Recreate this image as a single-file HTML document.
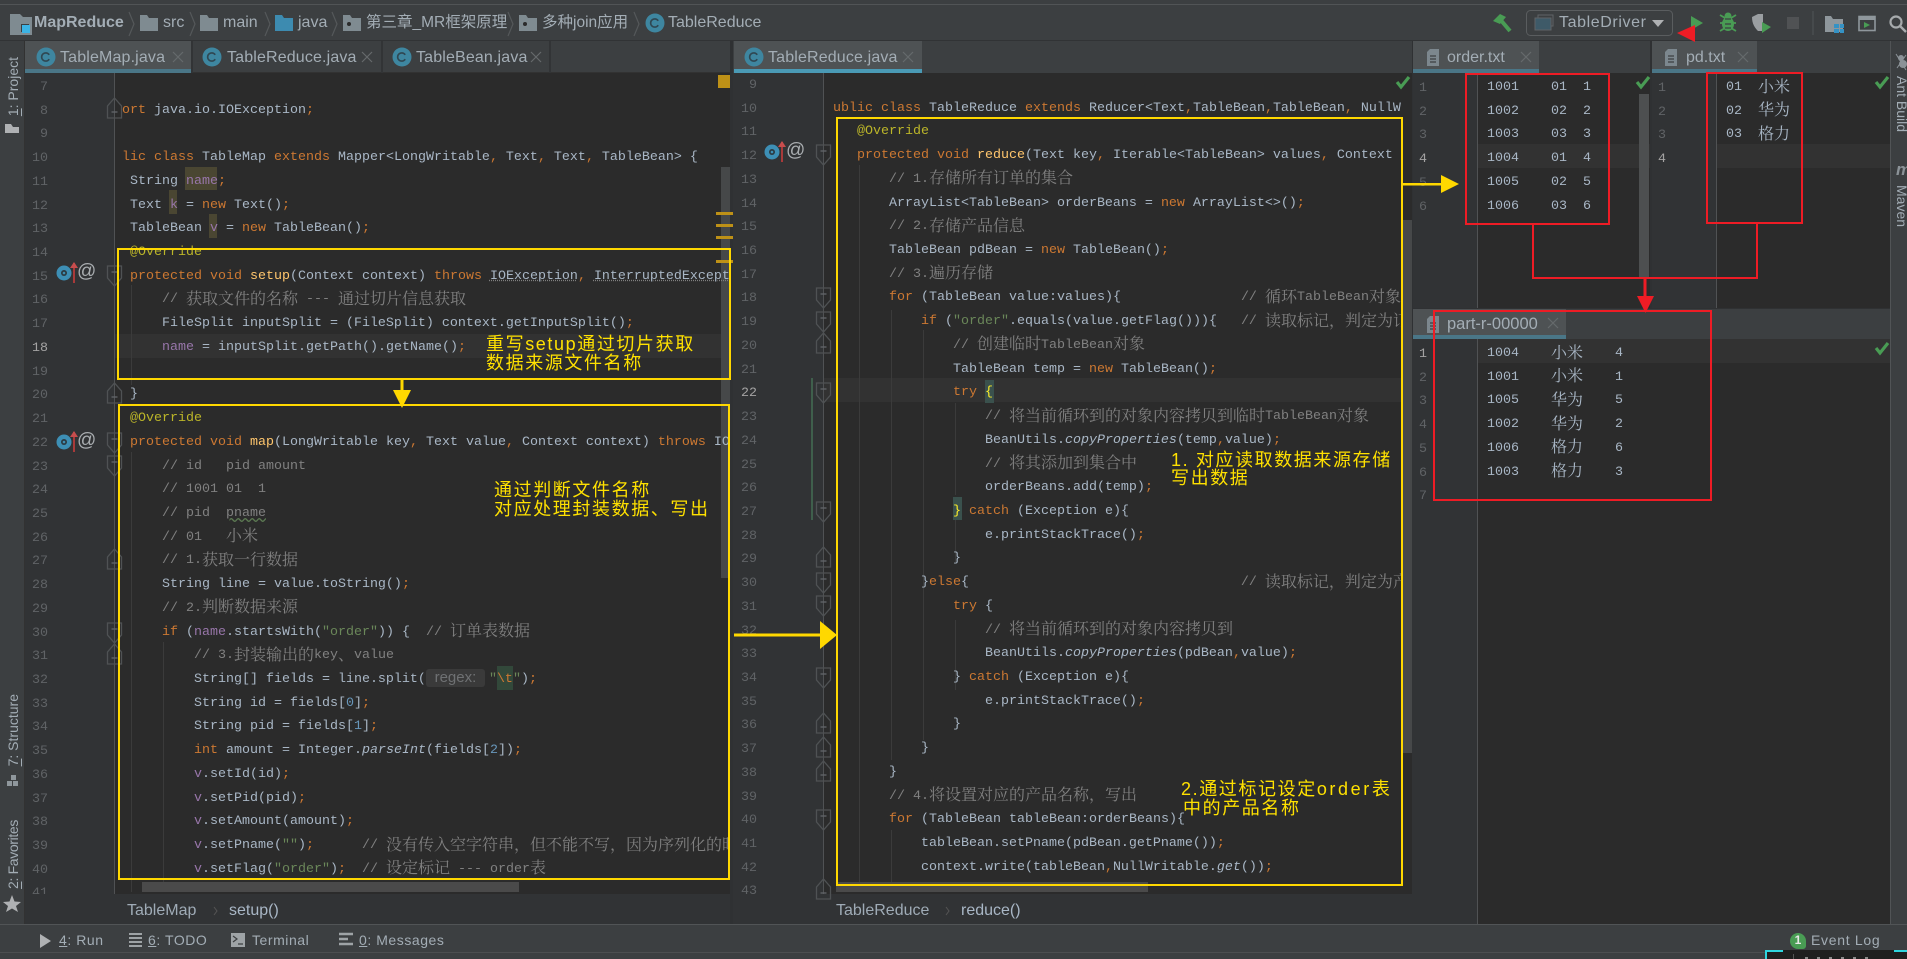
<!DOCTYPE html>
<html lang="zh">
<head>
<meta charset="utf-8">
<title>MapReduce</title>
<style>
html,body{margin:0;padding:0;background:#3c3f41}
body{position:relative;width:1907px;height:959px;overflow:hidden;font-family:"Liberation Sans","Noto Sans CJK SC",sans-serif;color:#a4afb8}
.a{position:absolute}
.ui{position:absolute;white-space:pre;font-size:16px;line-height:20px;color:#a3adb5}
.code{position:absolute;overflow:hidden;font:13.33px "Liberation Mono","Noto Serif CJK SC",monospace;color:#a9b7c6}
.code p{margin:0;height:23.72px;line-height:23.72px;white-space:pre}
.ln{position:absolute;margin:0;overflow:hidden;font:13.33px/23.72px "Liberation Mono",monospace;color:#606366;text-align:right;white-space:pre}
.ln b{font-weight:normal;color:#a4a3a3}
k{color:#cc7832}c{color:#808080}f{color:#9876aa}y{color:#ffc66d}t{color:#6a8759}n{color:#6897bb}o{color:#bbb529}
z{font-size:16px;line-height:0;position:relative;top:1.5px;font-family:"Noto Serif CJK SC","Noto Sans CJK SC",serif}
u{text-decoration:underline dotted #808080}
u.w{text-decoration:underline wavy #5c7a52}
.hint{display:inline-block;width:59px;margin-right:4px;font:15px/18px "Liberation Sans",sans-serif;color:#6f7173;background:#3a3a3a;border-radius:3px;text-align:center;vertical-align:baseline}
.v{position:absolute;writing-mode:vertical-rl;white-space:pre;font-size:14px;line-height:20px;color:#a3adb5}
.vr{transform:rotate(180deg)}
.note{position:absolute;white-space:pre;font:18px/20px "Liberation Sans","Noto Sans CJK SC",sans-serif;letter-spacing:1.6px;color:#ffe100;z-index:9}
.tool{position:absolute;top:931px;white-space:pre;font-size:14px;line-height:18px;letter-spacing:.55px;color:#a3adb5}
</style>
</head>
<body>

<!-- backgrounds -->
<div class="a" style="left:0;top:4px;width:1907px;height:1px;background:#515456"></div>
<div class="a" style="left:0;top:40px;width:1907px;height:1px;background:#313335"></div>

<!-- pane 1 -->
<div class="a" style="left:25px;top:73px;width:705px;height:821px;background:#2b2b2b"></div>
<div class="a" style="left:25px;top:73px;width:90px;height:821px;background:#313335"></div>
<div class="a" style="left:25px;top:894px;width:705px;height:30px;background:#313335"></div>
<div class="a" style="left:25px;top:72px;width:705px;height:1px;background:#323232"></div>
<div class="a" style="left:24px;top:41px;width:1px;height:883px;background:#323232"></div>
<!-- pane 2 -->
<div class="a" style="left:730px;top:41px;width:3px;height:883px;background:#2f3133"></div>
<div class="a" style="left:733px;top:73px;width:679px;height:821px;background:#2b2b2b"></div>
<div class="a" style="left:733px;top:73px;width:90px;height:821px;background:#313335"></div>
<div class="a" style="left:733px;top:894px;width:679px;height:30px;background:#313335"></div>
<!-- pane 3 / 4 / 5 -->
<div class="a" style="left:1412px;top:41px;width:1px;height:883px;background:#2f3133"></div>
<div class="a" style="left:1413px;top:73px;width:477px;height:235px;background:#2b2b2b"></div>
<div class="a" style="left:1413px;top:73px;width:64px;height:235px;background:#313335"></div>
<div class="a" style="left:1652px;top:73px;width:64px;height:235px;background:#313335"></div>
<div class="a" style="left:1650px;top:41px;width:2px;height:267px;background:#2f3133"></div>
<div class="a" style="left:1413px;top:339px;width:477px;height:585px;background:#2b2b2b"></div>
<div class="a" style="left:1412px;top:339px;width:65px;height:585px;background:#313335"></div>
<div class="a" style="left:1477px;top:73px;width:1px;height:235px;background:#505254"></div>
<div class="a" style="left:1716px;top:73px;width:1px;height:235px;background:#505254"></div>
<div class="a" style="left:1477px;top:339px;width:1px;height:585px;background:#505254"></div>
<div class="a" style="left:1413px;top:308px;width:477px;height:1px;background:#2f3133"></div>
<div class="a" style="left:1890px;top:41px;width:1px;height:883px;background:#515456"></div>
<div class="a" style="left:114px;top:73px;width:1px;height:821px;background:#505254"></div>
<div class="a" style="left:823px;top:73px;width:1px;height:821px;background:#505254"></div>

<!-- current line bands -->
<div class="a" style="left:115px;top:334px;width:615px;height:24px;background:#323232"></div>
<div class="a" style="left:824px;top:378px;width:588px;height:24px;background:#323232"></div>
<div class="a" style="left:1478px;top:144px;width:172px;height:24px;background:#323232"></div>
<div class="a" style="left:1717px;top:144px;width:173px;height:24px;background:#323232"></div>
<div class="a" style="left:1478px;top:339px;width:412px;height:24px;background:#323232"></div>

<!-- identifier highlights -->
<div class="a" style="left:185px;top:167px;width:32px;height:23px;background:#4a4632"></div>
<div class="a" style="left:169px;top:190px;width:8px;height:24px;background:#4a4632"></div>
<div class="a" style="left:209px;top:214px;width:8px;height:24px;background:#4a4632"></div>
<div class="a" style="left:497px;top:666px;width:16px;height:24px;background:#32483a"></div>
<div class="a" style="left:985px;top:380px;width:9px;height:23px;background:#3a514d"></div>
<div class="a" style="left:953px;top:497px;width:9px;height:23px;background:#3a514d"></div>

<!-- indent guides -->
<div class="a" style="left:131px;top:285px;width:1px;height:100px;background:#3b3b3b"></div>
<div class="a" style="left:131px;top:452px;width:1px;height:440px;background:#3b3b3b"></div>
<div class="a" style="left:163px;top:642px;width:1px;height:250px;background:#3b3b3b"></div>
<div class="a" style="left:859px;top:165px;width:1px;height:725px;background:#3b3b3b"></div>
<div class="a" style="left:891px;top:310px;width:1px;height:450px;background:#3b3b3b"></div>
<div class="a" style="left:891px;top:830px;width:1px;height:60px;background:#3b3b3b"></div>
<div class="a" style="left:923px;top:330px;width:1px;height:410px;background:#3b3b3b"></div>
<div class="a" style="left:955px;top:403px;width:1px;height:92px;background:#3b3b3b"></div>
<div class="a" style="left:955px;top:520px;width:1px;height:42px;background:#3b3b3b"></div>
<div class="a" style="left:955px;top:620px;width:1px;height:70px;background:#3b3b3b"></div>
<div class="a" style="left:811px;top:378px;width:2px;height:142px;background:#3f5f4c"></div>

<!-- scrollbars and stripes -->
<div class="a" style="left:721px;top:167px;width:9px;height:411px;background:#464849"></div>
<div class="a" style="left:718px;top:75px;width:12px;height:13px;background:#be9117"></div>
<div class="a" style="left:716px;top:212px;width:17px;height:3px;background:#be9117"></div>
<div class="a" style="left:716px;top:224px;width:17px;height:3px;background:#be9117"></div>
<div class="a" style="left:716px;top:236px;width:17px;height:3px;background:#be9117"></div>
<div class="a" style="left:716px;top:260px;width:17px;height:3px;background:#be9117"></div>
<div class="a" style="left:1402px;top:220px;width:10px;height:533px;background:#464849"></div>
<div class="a" style="left:1639px;top:94px;width:10px;height:184px;background:#4d4f50"></div>
<div class="a" style="left:142px;top:882px;width:377px;height:10px;background:#4a4a4a;z-index:2"></div>
<div class="a" style="left:836px;top:882px;width:312px;height:10px;background:#4a4a4a;z-index:2"></div>

<!-- tab bars -->
<div class="a" style="left:25px;top:41px;width:167px;height:32px;background:#4e5254"></div>
<div class="a" style="left:25px;top:69px;width:167px;height:4px;background:#4a7687"></div>
<div class="a" style="left:191px;top:41px;width:2px;height:32px;background:#323436"></div>
<div class="a" style="left:381px;top:41px;width:2px;height:32px;background:#323436"></div>
<div class="a" style="left:549px;top:41px;width:2px;height:32px;background:#323436"></div>
<div class="a" style="left:734px;top:41px;width:188px;height:32px;background:#4e5254"></div>
<div class="a" style="left:734px;top:69px;width:188px;height:4px;background:#4a9ab5"></div>
<div class="a" style="left:1413px;top:41px;width:126px;height:32px;background:#4e5254"></div>
<div class="a" style="left:1413px;top:69px;width:126px;height:4px;background:#4a7687"></div>
<div class="a" style="left:1652px;top:41px;width:105px;height:32px;background:#4e5254"></div>
<div class="a" style="left:1652px;top:69px;width:105px;height:4px;background:#4a7687"></div>
<div class="a" style="left:1413px;top:309px;width:153px;height:30px;background:#4e5254"></div>
<div class="a" style="left:1413px;top:335px;width:153px;height:4px;background:#4a7687"></div>

<div class="ui" style="left:60px;top:48px;letter-spacing:.15px">TableMap.java</div>
<div class="ui" style="left:227px;top:48px;letter-spacing:.15px">TableReduce.java</div>
<div class="ui" style="left:416px;top:48px;letter-spacing:.15px">TableBean.java</div>
<div class="ui" style="left:768px;top:48px;letter-spacing:.15px">TableReduce.java</div>
<div class="ui" style="left:1447px;top:48px">order.txt</div>
<div class="ui" style="left:1686px;top:48px">pd.txt</div>
<div class="ui" style="left:1447px;top:314px;font-size:16.5px">part-r-00000</div>

<!-- nav bar text -->
<div class="ui" style="left:34px;top:13px;font-weight:bold">MapReduce</div>
<div class="ui" style="left:163px;top:13px">src</div>
<div class="ui" style="left:223px;top:13px">main</div>
<div class="ui" style="left:298px;top:13px">java</div>
<div class="ui" style="left:366px;top:13px;font-size:15.5px">第三章_MR框架原理</div>
<div class="ui" style="left:542px;top:13px;font-size:15.5px">多种join应用</div>
<div class="ui" style="left:668px;top:13px">TableReduce</div>
<div class="ui" style="left:1559px;top:13px;letter-spacing:.6px">TableDriver</div>

<!-- bread crumbs bottom -->
<div class="ui" style="left:127px;top:901px;color:#9fabb6">TableMap</div>
<div class="ui" style="left:229px;top:901px;color:#a9b7c6">setup()</div>
<div class="ui" style="left:836px;top:901px;color:#9fabb6">TableReduce</div>
<div class="ui" style="left:961px;top:901px;color:#a9b7c6">reduce()</div>

<!-- bottom bar -->
<div class="a" style="left:0;top:924px;width:1907px;height:1px;background:#515456"></div>
<div class="a" style="left:0;top:952px;width:1907px;height:1px;background:#4c4e50"></div>
<div class="tool" style="left:59px"><span style="text-decoration:underline">4</span>: Run</div>
<div class="tool" style="left:148px"><span style="text-decoration:underline">6</span>: TODO</div>
<div class="tool" style="left:252px">Terminal</div>
<div class="tool" style="left:359px"><span style="text-decoration:underline">0</span>: Messages</div>
<div class="tool" style="left:1811px;letter-spacing:.7px">Event Log</div>
<div class="a" style="left:1790px;top:933px;width:16px;height:16px;border-radius:8px 8px 3px 8px;background:#499c54;color:#e8e8e8;font-size:12px;line-height:15px;text-align:center;font-weight:bold">1</div>
<div class="a" style="left:1765px;top:950px;width:142px;height:9px;background:#1f1f1f"></div>
<div class="a" style="left:1765px;top:950px;width:18px;height:2px;background:#2fd5df"></div>
<div class="a" style="left:1765px;top:950px;width:2px;height:9px;background:#2fd5df"></div>
<div class="a" style="left:1894px;top:950px;width:13px;height:2px;background:#2fd5df"></div>
<div class="a" style="left:1793px;top:954px;width:1px;height:5px;background:#555"></div>
<div class="a" style="left:1805px;top:957px;width:70px;height:2px;background:repeating-linear-gradient(90deg,#8a8a8a 0 3px,#1f1f1f 3px 12px)"></div>

<!-- vertical labels -->
<div class="v vr" style="left:3px;top:57px"><span style="text-decoration:underline">1</span>: Project</div>
<div class="v vr" style="left:3px;top:694px"><span style="text-decoration:underline">7</span>: Structure</div>
<div class="v vr" style="left:3px;top:820px;letter-spacing:-.35px"><span style="text-decoration:underline">2</span>: Favorites</div>
<div class="v" style="left:1892px;top:76px">Ant Build</div>
<div class="v" style="left:1892px;top:185px">Maven</div>
<div class="a" style="left:1896px;top:160px;font:italic bold 17px/20px 'Liberation Sans',sans-serif;color:#8b9297">m</div>

<!-- shapes -->
<svg class="a" style="left:0;top:0;z-index:2" width="1907" height="959" viewBox="0 0 1907 959">
<defs>
<g id="fs" fill="none" stroke="#4f5254" stroke-width="1.3"><path d="M-7-9H7V3L0 11-7 3Z"/><path d="M-3-3H3" stroke="#63666a"/></g>
<g id="fe" fill="none" stroke="#4f5254" stroke-width="1.3"><path d="M-7 9H7V-3L0-11-7-3Z"/><path d="M-3 3H3" stroke="#63666a"/></g>
<g id="folder"><path d="M0 1H7L9 4H18V17H0Z"/></g>
<g id="file"><path d="M3 0H12V17H0V3Z" fill="#7c878e"/><path d="M3 7H9M3 10H9M3 13H9" stroke="#3c3f41" stroke-width="1.3"/></g>
<g id="check"><path d="M1 6 5 11 13 1" fill="none" stroke="#499c54" stroke-width="3.2"/></g>
<g id="cc"><circle r="9.5" fill="#3e86a0"/><path d="M3.2-2.2A4.1 4.1 0 1 0 3.2 2.2" fill="none" stroke="#2f4752" stroke-width="1.6"/></g>
<g id="ov"><circle cx="0" cy="0" r="7.500" fill="#3d8fb5"/><circle r="3" fill="#2b3a42"/><circle r="1.300" fill="#3d8fb5"/><path d="M10-10V10" stroke="#a83a3a" stroke-width="2"/><path d="M6-5 10-11 14-5Z" fill="#c74d4d"/></g>
</defs>

<!-- close marks -->
<g stroke="#666a6c" stroke-width="1.2" fill="none">
<path d="M173 52 183 62M183 52 173 62"/>
<path d="M362 52 372 62M372 52 362 62"/>
<path d="M531 52 541 62M541 52 531 62"/>
<path d="M903 52 913 62M913 52 903 62"/>
<path d="M1521 52 1531 62M1531 52 1521 62"/>
<path d="M1738 52 1748 62M1748 52 1738 62"/>
<path d="M1548 318 1558 328M1558 318 1548 328"/>
</g>

<!-- file tab icons -->
<use href="#cc" x="46" y="57"/><use href="#cc" x="212" y="57"/><use href="#cc" x="402" y="57"/><use href="#cc" x="754" y="57"/><use href="#cc" x="655" y="23"/>
<use href="#file" x="1427" y="49"/><use href="#file" x="1665" y="49"/><use href="#file" x="1427" y="316"/>

<!-- nav icons -->
<path d="M10 14H20L23 17H32V35H10Z" fill="#7f8b91"/><rect x="21" y="24" width="8" height="8" fill="#3c3f41"/><rect x="22" y="25" width="8" height="8" fill="#3cb4e5"/>
<use href="#folder" x="140" y="14" fill="#7f8b91"/><use href="#folder" x="200" y="14" fill="#7f8b91"/><use href="#folder" x="275" y="14" fill="#3d8bb0"/>
<use href="#folder" x="343" y="14" fill="#7f8b91"/><circle cx="349" cy="24" r="2" fill="#2b2b2b"/>
<use href="#folder" x="519" y="14" fill="#7f8b91"/><circle cx="525" cy="24" r="2" fill="#2b2b2b"/>
<g fill="none" stroke="#55585a" stroke-width="1.2"><path d="M129 12 134 24 129 36"/><path d="M190 12 195 24 190 36"/><path d="M265 12 270 24 265 36"/><path d="M332 12 337 24 332 36"/><path d="M508 12 513 24 508 36"/><path d="M634 12 639 24 634 36"/></g>

<!-- toolbar icons -->
<path d="M1499 18 1510 31" stroke="#499c54" stroke-width="4"/><path d="M1493 21 1500 14 1506 17 1500 24Z" fill="#499c54"/>
<rect x="1526.500" y="10.500" width="146" height="25" rx="4" fill="none" stroke="#5a5d5f"/>
<rect x="1538" y="15" width="15" height="11" fill="none" stroke="#5f6366"/><rect x="1535" y="18" width="16" height="12" fill="#3e5a68" stroke="#5f6366"/>
<path d="M1652 20H1664L1658 27Z" fill="#afb1b3"/>
<path d="M1691 16 1703 23 1691 30Z" fill="#499c54"/>
<g fill="#499c54"><ellipse cx="1728" cy="24" rx="6" ry="7"/><circle cx="1728" cy="16" r="3.500"/></g>
<g stroke="#499c54" stroke-width="1.800"><path d="M1720 15 1725 18M1736 15 1731 18M1720 23H1736M1720 31 1725 28M1736 31 1731 28"/></g>
<path d="M1725 19H1731M1725 24H1731M1725 28H1731" stroke="#3c3f41" stroke-width="1.200"/>
<path d="M1752 17 1758 14H1763V31H1758C1755 28 1752 24 1752 17Z" fill="#9a9ea1"/><path d="M1762 22 1771 27 1762 33Z" fill="#499c54"/>
<rect x="1787" y="17" width="12" height="12" fill="#505254"/>
<path d="M1813 11V35" stroke="#515456"/>
<path d="M1825 16H1831L1833 19H1843V32H1825Z" fill="#8f979c"/><rect x="1834" y="24" width="5" height="4" fill="#3592c4"/><rect x="1840" y="24" width="4" height="4" fill="#3592c4"/><rect x="1834" y="29" width="5" height="4" fill="#3592c4"/><rect x="1840" y="29" width="4" height="4" fill="#3592c4"/>
<rect x="1859" y="16.500" width="16" height="14" fill="none" stroke="#8f979c" stroke-width="1.600"/><path d="M1859 17H1875V20H1859Z" fill="#8f979c"/><path d="M1864 22 1870 25 1864 28Z" fill="#499c54"/>
<circle cx="1896" cy="22" r="5.500" fill="none" stroke="#a7abad" stroke-width="2.200"/><path d="M1900 26 1906 32" stroke="#a7abad" stroke-width="2.400"/>

<!-- check marks -->
<use href="#check" x="1396" y="76"/><use href="#check" x="1636" y="76"/><use href="#check" x="1875" y="76"/><use href="#check" x="1875" y="342"/>

<!-- side icons -->
<path d="M5 124H11L13 127H19V133H5Z" fill="#afb1b3"/>
<g fill="#8f979c"><rect x="11" y="775" width="5" height="5"/><rect x="7" y="781" width="5" height="5"/><rect x="13" y="781" width="5" height="5"/></g>
<path d="M12 895 14.500 901.500 21 902 16 906 18 912 12 908.500 6 912 8 906 3 902 9.500 901.500Z" fill="#afb1b3"/>
<circle cx="1901" cy="58" r="3" fill="#8b9297"/><circle cx="1903" cy="64" r="4" fill="#8b9297"/><path d="M1896 54 1906 70M1906 55 1897 68" stroke="#8b9297"/>

<!-- bottom tool icons -->
<path d="M40 934 51 941 40 948Z" fill="#afb1b3"/>
<path d="M129 934H142M129 938H142M129 942H142M129 946H142" stroke="#9ea3a6" stroke-width="2"/>
<rect x="231" y="933" width="14" height="14" fill="#9ea3a6"/><path d="M233 936 237 939 233 942M238 944H243" stroke="#3c3f41" fill="none" stroke-width="1.200"/>
<path d="M339 934H353M339 939H348M339 944H353" stroke="#9ea3a6" stroke-width="2.400"/>

<!-- breadcrumb chevrons -->
<path d="M214 907 217 911 214 915" fill="none" stroke="#555"/>
<path d="M946 907 949 911 946 915" fill="none" stroke="#555"/>

<!-- gutter icons -->
<use href="#ov" x="64" y="273"/><use href="#ov" x="64" y="442"/><use href="#ov" x="772" y="152"/>

<!-- fold markers -->
<use href="#fe" x="114.500" y="109"/><use href="#fs" x="114.500" y="275"/><use href="#fe" x="114.500" y="394"/><use href="#fs" x="114.500" y="442"/><use href="#fs" x="114.500" y="465"/><use href="#fe" x="114.500" y="560"/><use href="#fs" x="114.500" y="632"/><use href="#fe" x="114.500" y="655"/>
<use href="#fs" x="823.500" y="154"/><use href="#fs" x="823.500" y="297"/><use href="#fs" x="823.500" y="321"/><use href="#fe" x="823.500" y="344"/><use href="#fs" x="823.500" y="392"/><use href="#fs" x="823.500" y="511"/><use href="#fe" x="823.500" y="558"/><use href="#fs" x="823.500" y="582"/><use href="#fs" x="823.500" y="605"/><use href="#fs" x="823.500" y="677"/><use href="#fe" x="823.500" y="724"/><use href="#fe" x="823.500" y="748"/><use href="#fe" x="823.500" y="772"/><use href="#fs" x="823.500" y="819"/><use href="#fe" x="823.500" y="890"/>
</svg>

<div class="ui" style="left:77px;top:262px;font-size:19px;color:#a9adb0;z-index:3">@</div>
<div class="ui" style="left:77px;top:431px;font-size:19px;color:#a9adb0;z-index:3">@</div>
<div class="ui" style="left:786px;top:141px;font-size:19px;color:#a9adb0;z-index:3">@</div>

<!-- line numbers -->
<pre class="ln" style="left:25px;top:76px;width:23px;height:818px">7
8
9
10
11
12
13
14
15
16
17
<b>18</b>
19
20
21
22
23
24
25
26
27
28
29
30
31
32
33
34
35
36
37
38
39
40
41</pre>
<pre class="ln" style="left:733px;top:74px;width:24px;height:820px">9
10
11
12
13
14
15
16
17
18
19
20
21
<b>22</b>
23
24
25
26
27
28
29
30
31
32
33
34
35
36
37
38
39
40
41
42
43</pre>
<pre class="ln" style="left:1413px;top:77px;width:14px;height:228px">1
2
3
<b>4</b>
5
6</pre>
<pre class="ln" style="left:1652px;top:77px;width:14px;height:228px">1
2
3
<b>4</b></pre>
<pre class="ln" style="left:1413px;top:343px;width:14px;height:200px"><b>1</b>
2
3
4
5
6
7</pre>

<!-- left code -->
<div class="code" style="left:98px;top:75px;width:632px;height:817px;z-index:1;clip-path:inset(0 0 0 17px)">
<p></p>
<p>   <k>ort </k>java.io.IOException<k>;</k></p>
<p></p>
<p>   <k>lic class </k>TableMap <k>extends </k>Mapper&lt;LongWritable<k>,</k> Text<k>,</k> Text<k>,</k> TableBean&gt; {</p>
<p>    String <f>name</f><k>;</k></p>
<p>    Text <f>k</f> = <k>new </k>Text()<k>;</k></p>
<p>    TableBean <f>v</f> = <k>new </k>TableBean()<k>;</k></p>
<p>    <o>@Override</o></p>
<p>    <k>protected void </k><y>setup</y>(Context context) <k>throws </k><u>IOException</u><k>,</k> <u>InterruptedException</u> {</p>
<p>        <c>// <z>获取文件的名称</z> --- <z>通过切片信息获取</z></c></p>
<p>        FileSplit inputSplit = (FileSplit) context.getInputSplit()<k>;</k></p>
<p>        <f>name</f> = inputSplit.getPath().getName()<k>;</k></p>
<p></p>
<p>    }</p>
<p>    <o>@Override</o></p>
<p>    <k>protected void </k><y>map</y>(LongWritable key<k>,</k> Text value<k>,</k> Context context) <k>throws </k>IOException</p>
<p>        <c>// id   pid amount</c></p>
<p>        <c>// 1001 01  1</c></p>
<p>        <c>// pid  <u class="w">pname</u></c></p>
<p>        <c>// 01   <z>小米</z></c></p>
<p>        <c>// 1.<z>获取一行数据</z></c></p>
<p>        String line = value.toString()<k>;</k></p>
<p>        <c>// 2.<z>判断数据来源</z></c></p>
<p>        <k>if </k>(<f>name</f>.startsWith(<t>"order"</t>)) {  <c>// <z>订单表数据</z></c></p>
<p>            <c>// 3.<z>封装输出的</z>key<z>、</z>value</c></p>
<p>            String[] fields = line.split(<span class="hint">regex:</span><t>"</t><k>\t</k><t>"</t>)<k>;</k></p>
<p>            String id = fields[<n>0</n>]<k>;</k></p>
<p>            String pid = fields[<n>1</n>]<k>;</k></p>
<p>            <k>int </k>amount = Integer.<i>parseInt</i>(fields[<n>2</n>])<k>;</k></p>
<p>            <f>v</f>.setId(id)<k>;</k></p>
<p>            <f>v</f>.setPid(pid)<k>;</k></p>
<p>            <f>v</f>.setAmount(amount)<k>;</k></p>
<p>            <f>v</f>.setPname(<t>""</t>)<k>;</k>      <c>// <z>没有传入空字符串，但不能不写，因为序列化的时</z></c></p>
<p>            <f>v</f>.setFlag(<t>"order"</t>)<k>;</k>  <c>// <z>设定标记</z> --- order<z>表</z></c></p>
<p>            <f>k</f>.set(pid)<k>;</k></p>
</div>

<!-- right code -->
<div class="code" style="left:825px;top:73px;width:577px;height:819px;z-index:1">
<p></p>
<p> <k>ublic class </k>TableReduce <k>extends </k>Reducer&lt;Text<k>,</k>TableBean<k>,</k>TableBean<k>,</k> NullWritable&gt; {</p>
<p>    <o>@Override</o></p>
<p>    <k>protected void </k><y>reduce</y>(Text key<k>,</k> Iterable&lt;TableBean&gt; values<k>,</k> Context context)</p>
<p>        <c>// 1.<z>存储所有订单的集合</z></c></p>
<p>        ArrayList&lt;TableBean&gt; orderBeans = <k>new </k>ArrayList&lt;&gt;()<k>;</k></p>
<p>        <c>// 2.<z>存储产品信息</z></c></p>
<p>        TableBean pdBean = <k>new </k>TableBean()<k>;</k></p>
<p>        <c>// 3.<z>遍历存储</z></c></p>
<p>        <k>for </k>(TableBean value:values){               <c>// <z>循环</z>TableBean<z>对象</z></c></p>
<p>            <k>if </k>(<t>"order"</t>.equals(value.getFlag())){   <c>// <z>读取标记，判定为订单</z></c></p>
<p>                <c>// <z>创建临时</z>TableBean<z>对象</z></c></p>
<p>                TableBean temp = <k>new </k>TableBean()<k>;</k></p>
<p>                <k>try </k><span style="color:#ffef28">{</span></p>
<p>                    <c>// <z>将当前循环到的对象内容拷贝到临时</z>TableBean<z>对象</z></c></p>
<p>                    BeanUtils.<i>copyProperties</i>(temp<k>,</k>value)<k>;</k></p>
<p>                    <c>// <z>将其添加到集合中</z></c></p>
<p>                    orderBeans.add(temp)<k>;</k></p>
<p>                <span style="color:#ffef28">}</span> <k>catch </k>(Exception e){</p>
<p>                    e.printStackTrace()<k>;</k></p>
<p>                }</p>
<p>            }<k>else</k>{                                  <c>// <z>读取标记，判定为产品</z></c></p>
<p>                <k>try </k>{</p>
<p>                    <c>// <z>将当前循环到的对象内容拷贝到</z></c></p>
<p>                    BeanUtils.<i>copyProperties</i>(pdBean<k>,</k>value)<k>;</k></p>
<p>                } <k>catch </k>(Exception e){</p>
<p>                    e.printStackTrace()<k>;</k></p>
<p>                }</p>
<p>            }</p>
<p>        }</p>
<p>        <c>// 4.<z>将设置对应的产品名称，写出</z></c></p>
<p>        <k>for </k>(TableBean tableBean:orderBeans){</p>
<p>            tableBean.setPname(pdBean.getPname())<k>;</k></p>
<p>            context.write(tableBean<k>,</k>NullWritable.<i>get</i>())<k>;</k></p>
<p>        }</p>
</div>

<!-- data panes -->
<div class="code" style="left:1487px;top:76px;width:150px;height:229px;z-index:1">
<p>1001    01  1</p>
<p>1002    02  2</p>
<p>1003    03  3</p>
<p>1004    01  4</p>
<p>1005    02  5</p>
<p>1006    03  6</p>
</div>
<div class="code" style="left:1726px;top:76px;width:150px;height:229px;z-index:1">
<p>01  <z>小米</z></p>
<p>02  <z>华为</z></p>
<p>03  <z>格力</z></p>
</div>
<div class="code" style="left:1487px;top:342px;width:300px;height:200px;z-index:1">
<p>1004    <z>小米</z>    4</p>
<p>1001    <z>小米</z>    1</p>
<p>1005    <z>华为</z>    5</p>
<p>1002    <z>华为</z>    2</p>
<p>1006    <z>格力</z>    6</p>
<p>1003    <z>格力</z>    3</p>
</div>

<!-- annotations -->
<svg class="a" style="left:0;top:0;z-index:8" width="1907" height="959" viewBox="0 0 1907 959" shape-rendering="crispEdges">
<g fill="none" stroke="#ffd800" stroke-width="2">
<rect x="118" y="249" width="612" height="130"/>
<rect x="119" y="405" width="610" height="474"/>
<rect x="837" y="118" width="565" height="767"/>
<path d="M402 380V392" stroke-width="3"/>
<path d="M734 635H822" stroke-width="3"/>
<path d="M1403 184H1443" stroke-width="2.500"/>
</g>
<g fill="#ffd800" shape-rendering="auto">
<path d="M393 390H411L402 408Z"/>
<path d="M820 621 837 635 820 649Z"/>
<path d="M1441 175 1459 184 1441 193Z"/>
</g>
<g fill="none" stroke="#ee1c25" stroke-width="2">
<rect x="1466" y="74" width="143" height="150"/>
<rect x="1707" y="73" width="95" height="150"/>
<rect x="1434" y="311" width="277" height="189"/>
<path d="M1533 224V278H1757V223"/>
<path d="M1645 278V297" stroke-width="3"/>
</g>
<g fill="#ee1c25" shape-rendering="auto">
<path d="M1637 296H1654L1645.500 313Z"/>
<path d="M1677 33 1695 25V42Z"/>
</g>
</svg>

<div class="note" style="left:486px;top:334px">重写setup通过切片获取</div>
<div class="note" style="left:486px;top:353px">数据来源文件名称</div>
<div class="note" style="left:494px;top:480px">通过判断文件名称</div>
<div class="note" style="left:494px;top:499px">对应处理封装数据、写出</div>
<div class="note" style="left:1171px;top:450px">1. 对应读取数据来源存储</div>
<div class="note" style="left:1171px;top:468px">写出数据</div>
<div class="note" style="left:1181px;top:779px">2.通过标记设定<span style="letter-spacing:2.6px">order</span>表</div>
<div class="note" style="left:1183px;top:798px">中的产品名称</div>

</body>
</html>
